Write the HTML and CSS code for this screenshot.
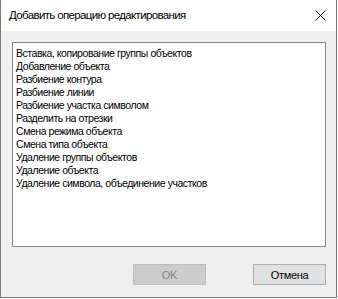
FILE: index.html
```html
<!DOCTYPE html>
<html>
<head>
    <title>Добавить операцию редактирования</title>
    <link rel="stylesheet" href="styles.css">
</head>
<body>
    <div class="dialog">
        <div class="title-bar">
            <span class="title">Добавить операцию редактирования</span>
            <span class="close">
                <svg width="11" height="11" viewBox="0 0 11 11">
                    <path d="M0.5 0.5 L10.5 10.5 M10.5 0.5 L0.5 10.5" stroke="#000" stroke-width="1" fill="none"/>
                </svg>
            </span>
        </div>
        <div class="content">
            <ul class="listbox">
                <li>Вставка, копирование группы объектов</li>
                <li>Добавление объекта</li>
                <li>Разбиение контура</li>
                <li>Разбиение линии</li>
                <li>Разбиение участка символом</li>
                <li>Разделить на отрезки</li>
                <li>Смена режима объекта</li>
                <li>Смена типа объекта</li>
                <li>Удаление группы объектов</li>
                <li>Удаление объекта</li>
                <li>Удаление символа, объединение участков</li>
            </ul>
            <div class="buttons">
                <button class="btn" disabled>OK</button>
                <button class="btn">Отмена</button>
            </div>
        </div>
    </div>
</body>
</html>
```

FILE: styles.css
```css
body {
    margin: 0;
    background-color: white;
    font-family: "Liberation Sans", Arial, sans-serif;
}
.dialog {
    width: 335px;
    height: 297px;
    border: 1px solid #7a7a7a;
    border-top: none;
    background-color: #f0f0f0;
    display: flex;
    flex-direction: column;
}
.title-bar {
    height: 31px;
    background-color: white;
    display: flex;
    align-items: center;
    justify-content: space-between;
    padding: 0 9px 0 8px;
}
.title {
    font-size: 11.5px;
    letter-spacing: -0.65px;
    color: #000;
    padding-bottom: 1px;
}
.close {
    display: flex;
    margin-right: 1px;
}
.content {
    flex: 1;
    padding: 11px 10px 0 11px;
}
.listbox {
    list-style: none;
    margin: 0;
    padding: 4px 3px 0;
    height: 199px;
    border: 1px solid #828790;
    background-color: white;
    font-size: 10.5px;
    letter-spacing: -0.45px;
    color: #000;
}
.listbox li {
    line-height: 13px;
    white-space: nowrap;
}
.buttons {
    display: flex;
    justify-content: flex-end;
    gap: 47px;
    margin-top: 17px;
}
.btn {
    width: 73px;
    height: 21px;
    padding: 0;
    font-family: inherit;
    font-size: 11px;
    letter-spacing: -0.3px;
    color: #000;
    background-color: #e1e1e1;
    border: 1px solid #adadad;
}
.btn:disabled {
    background-color: #cccccc;
    border-color: #bfbfbf;
    color: #838383;
}
```
